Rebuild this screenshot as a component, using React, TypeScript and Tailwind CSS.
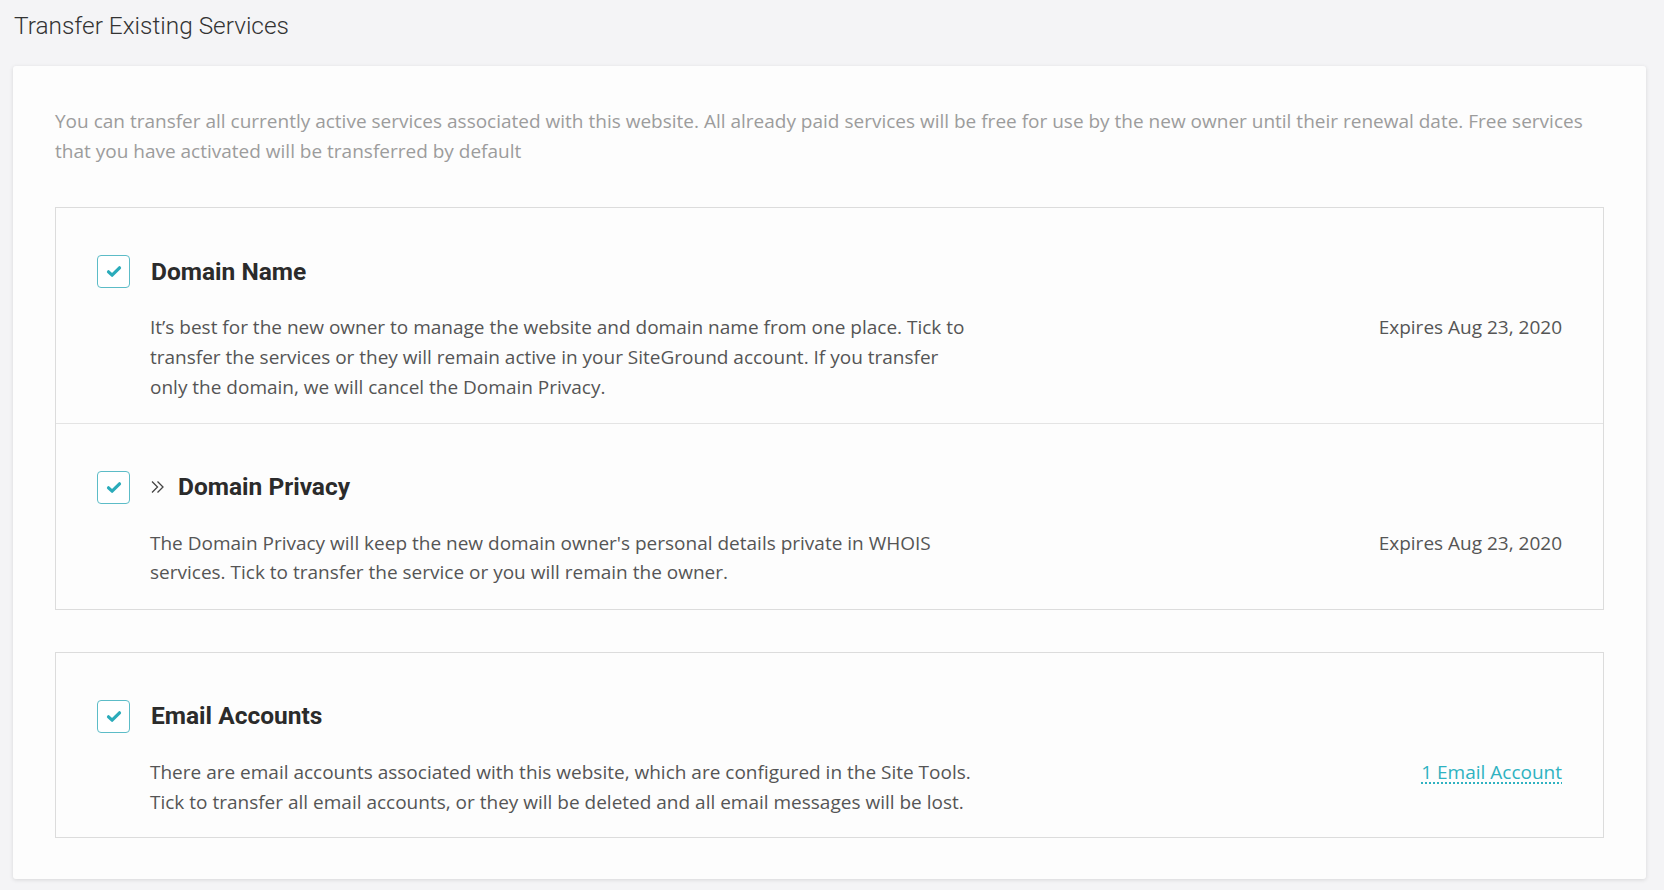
import React from 'react'

type Service = {
  title: string
  chevron?: boolean
  text: string
  aside: React.ReactNode
}

function Checkbox() {
  return (
    <div className="w-[33px] h-[33px] flex-shrink-0 rounded-[4px] border-[1.5px] border-[#5cbcc7] bg-white flex items-center justify-center">
      <svg width="16" height="13" viewBox="0 0 16 13" fill="none" stroke="#2aabba" strokeWidth="3.2" strokeLinecap="round" strokeLinejoin="round">
        <path d="M2.5 6.8l3.6 3.4 7.4-7.4" />
      </svg>
    </div>
  )
}

function DoubleChevron() {
  return (
    <svg width="15" height="14" viewBox="0 0 15 14" fill="none" stroke="#444" strokeWidth="1.3" className="-ml-[1px] mr-[13px]">
      <path d="M2 1.5l5.5 5.5L2 12.5" />
      <path d="M7.5 1.5L13 7l-5.5 5.5" />
    </svg>
  )
}

function ServiceRow({ s, top = 'pt-[47px]', bottom = 'pb-[20px]' }: { s: Service; top?: string; bottom?: string }) {
  return (
    <div className={`${top} ${bottom} pl-[41px] pr-[41px]`}>
      <div className="flex items-center">
        <Checkbox />
        <div className="ml-[21px] flex items-center">
          {s.chevron && <DoubleChevron />}
          <h2 className="font-['Roboto',sans-serif] font-bold text-[24.5px] leading-[30px] text-[#2b2b2b]">{s.title}</h2>
        </div>
      </div>
      <div className="mt-[25px] pl-[53px] flex justify-between items-start">
        <p className="w-[824px] text-[19px] leading-[29.7px] text-[#555]">{s.text}</p>
        <div className="text-[19px] leading-[29.7px] text-[#555]">{s.aside}</div>
      </div>
    </div>
  )
}

const domainName: Service = {
  title: 'Domain Name',
  text: 'It’s best for the new owner to manage the website and domain name from one place. Tick to transfer the services or they will remain active in your SiteGround account. If you transfer only the domain, we will cancel the Domain Privacy.',
  aside: 'Expires Aug 23, 2020',
}

const domainPrivacy: Service = {
  title: 'Domain Privacy',
  chevron: true,
  text: "The Domain Privacy will keep the new domain owner's personal details private in WHOIS services. Tick to transfer the service or you will remain the owner.",
  aside: 'Expires Aug 23, 2020',
}

const emailAccounts: Service = {
  title: 'Email Accounts',
  text: 'There are email accounts associated with this website, which are configured in the Site Tools. Tick to transfer all email accounts, or they will be deleted and all email messages will be lost.',
  aside: (
    <a href="#" className="text-[#2fb2c1] underline decoration-dotted decoration-[#2fb2c1] underline-offset-[4px]">
      1 Email Account
    </a>
  ),
}

export default function App() {
  return (
    <div className="min-h-screen bg-[#f4f4f6] font-['Open_Sans',sans-serif] pb-[11px]">
      <h1 className="pl-[14px] pt-[11px] font-['Roboto',sans-serif] font-light text-[24.4px] leading-[30px] text-[#333]">
        Transfer Existing Services
      </h1>

      <div className="ml-[13px] mt-[25px] w-[1633px] rounded-[3px] bg-[#fdfdfd] shadow-[0_1px_4px_rgba(0,0,0,0.12)] px-[42px] pt-[41px] pb-[41px]">
        <p className="text-[19px] leading-[29.7px] text-[#9c9c9c]">
          You can transfer all currently active services associated with this website. All already paid services will be free for use by the new owner until their renewal date. Free services that you have activated will be transferred by default
        </p>

        <div className="mt-[41px] border border-[#dcdcdc]">
          <div className="border-b border-[#e4e4e4]">
            <ServiceRow s={domainName} />
          </div>
          <ServiceRow s={domainPrivacy} bottom="pb-[21px]" />
        </div>

        <div className="mt-[42px] border border-[#dcdcdc]">
          <ServiceRow s={emailAccounts} />
        </div>
      </div>
    </div>
  )
}
